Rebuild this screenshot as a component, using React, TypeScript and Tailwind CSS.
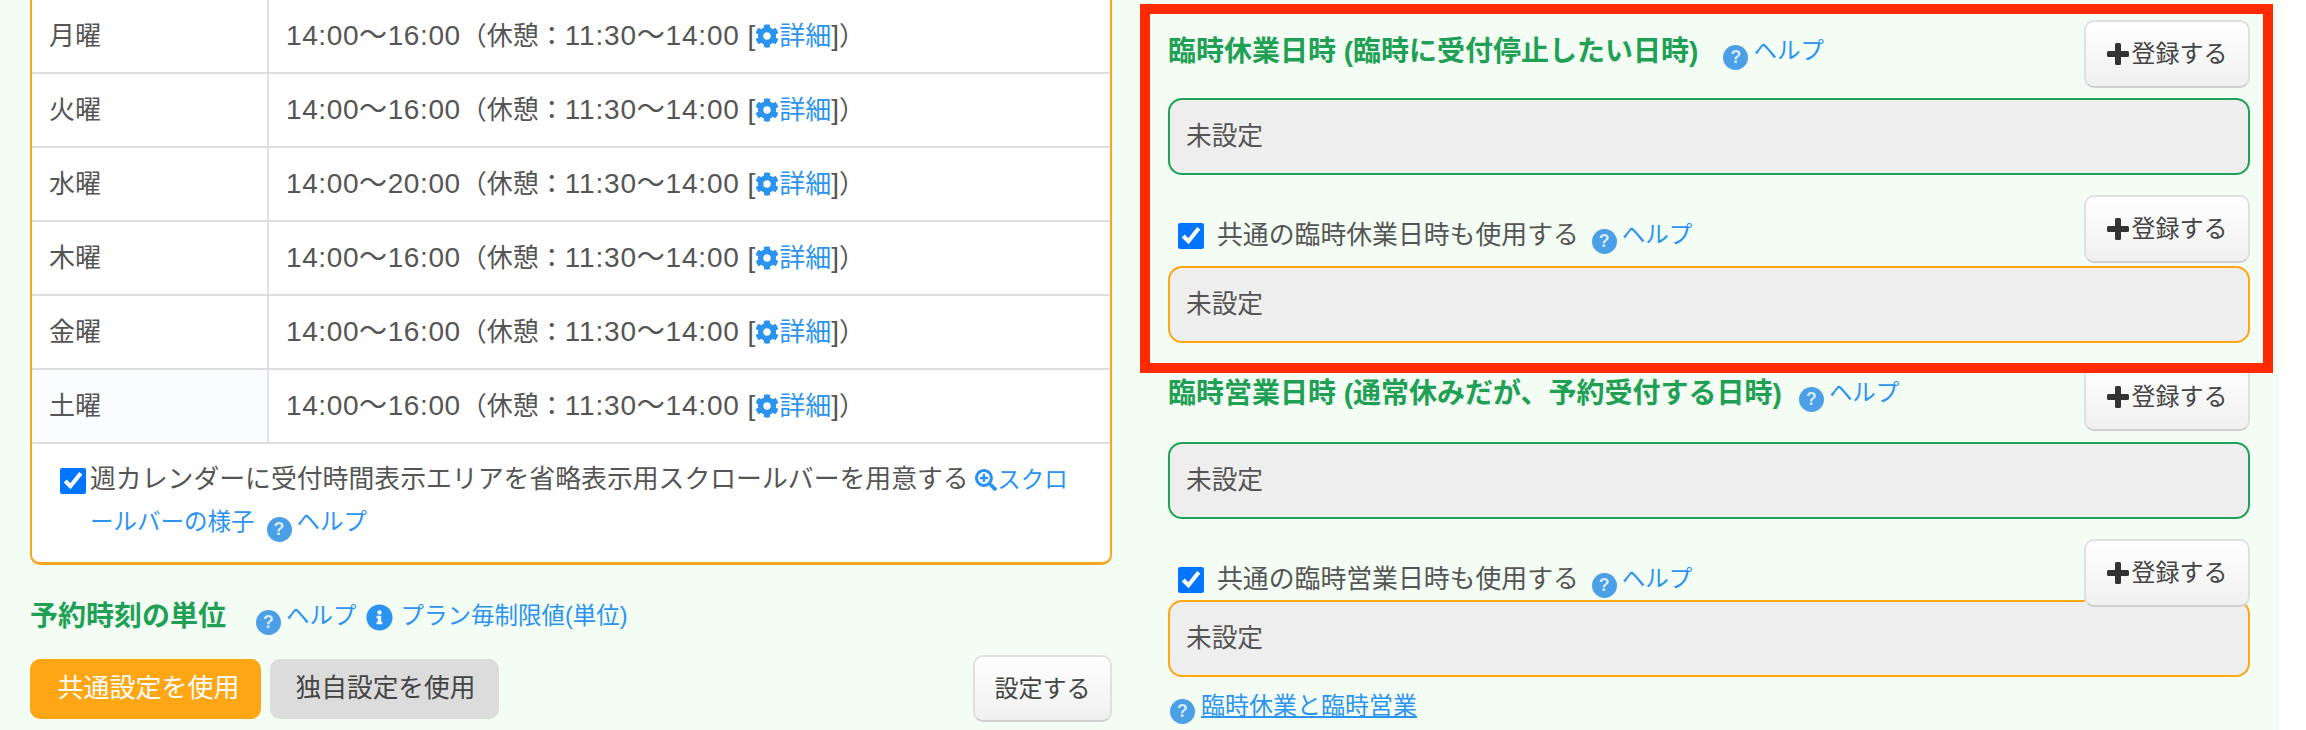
import { FaCog, FaInfoCircle, FaSearchPlus } from 'react-icons/fa'

const hours = [
  { day: '月曜', time: '14:00～16:00' },
  { day: '火曜', time: '14:00～16:00' },
  { day: '水曜', time: '14:00～20:00' },
  { day: '木曜', time: '14:00～16:00' },
  { day: '金曜', time: '14:00～16:00' },
  { day: '土曜', time: '14:00～16:00' },
]

function HelpIcon({ className = '' }: { className?: string }) {
  return (
    <span className={`inline-flex h-[25px] w-[25px] shrink-0 translate-y-[5px] items-center justify-center rounded-full bg-[#4a9fe6] text-[18px] font-bold leading-none text-[#d8ecfb] blur-[0.5px] ${className}`}>
      ?
    </span>
  )
}

function HelpLink({ label = 'ヘルプ' }: { label?: string }) {
  return <a className="text-[23.5px] leading-none text-[#2b93f0]">{label}</a>
}

function PlusIcon() {
  return (
    <svg viewBox="0 0 22 22" className="h-[22px] w-[22px] shrink-0 text-[#333]" fill="currentColor">
      <path d="M8 1.5A1.5 1.5 0 0 1 9.500 0h3A1.500 1.500 0 0 1 14 1.500V8h6.500A1.500 1.500 0 0 1 22 9.500v3a1.500 1.500 0 0 1-1.500 1.500H14v6.500a1.500 1.500 0 0 1-1.500 1.500h-3A1.500 1.500 0 0 1 8 20.500V14H1.500A1.500 1.500 0 0 1 0 12.500v-3A1.500 1.500 0 0 1 1.500 8H8z" />
    </svg>
  )
}

function AddButton() {
  return (
    <button className="relative z-10 flex h-[68px] w-[166px] shrink-0 items-center justify-center gap-[3px] rounded-[10px] border-2 border-[#e0e0e0] border-b-[#cfcfcf] bg-gradient-to-b from-white to-[#f0f0f0] text-[24px] text-[#444]">
      <PlusIcon />
      登録する
    </button>
  )
}

function ValueBox({ color }: { color: string }) {
  return (
    <div className={`flex h-[77px] items-center rounded-[14px] border-2 bg-[#eeeeee] pl-[16px] text-[25.7px] text-[#555] ${color}`}>
      未設定
    </div>
  )
}

function CommonRow({ label, className }: { label: string; className: string }) {
  return (
    <div className={`flex items-start justify-between ${className}`}>
      <div className="mt-[28px] flex items-center pl-[10px]">
        <input type="checkbox" checked readOnly className="h-[26px] w-[26px] accent-[#0075ff]" />
        <span className="ml-[13px] text-[25.85px] leading-none text-[#555]">{label}</span>
        <HelpIcon className="ml-[13px] mr-[5px]" />
        <HelpLink />
      </div>
      <AddButton />
    </div>
  )
}

export default function App() {
  return (
    <div className="h-[730px] w-full overflow-hidden bg-white font-['Liberation_Sans','Noto_Sans_CJK_JP',sans-serif]">
      <div className="flex h-full w-[2279px] items-start bg-[#f3fdf3] pl-[30px]">
        {/* left column */}
        <div className="w-[1082px] shrink-0">
          <div className="h-[565px] rounded-b-[10px] border-x-2 border-b-[3px] border-[#f5a623] bg-white">
            {hours.map((row) => (
              <div key={row.day} className="flex h-[74px] border-b-2 border-[#dddddd] text-[26px] text-[#555]">
                <div className={`flex w-[237px] items-center border-r-2 border-[#e2e2e2] pl-[17px] ${row.day === '土曜' ? 'bg-[#fbfcff]' : ''}`}>
                  {row.day}
                </div>
                <div className="flex flex-1 items-center whitespace-pre pl-[17px]">
                  <span className="text-[28px] tracking-[0.6px]">{row.time}</span>
                  （休憩：
                  <span className="text-[28px] tracking-[0.8px]">11:30～14:00</span>
                  <span className="text-[28px]"> [</span>
                  <FaCog className="h-[24px] w-[24px] text-[#2b93f0]" />
                  <a className="text-[#2b93f0]">詳細</a>
                  <span className="text-[28px]">]</span>
                  <span className="tracking-[1px]">）</span>
                </div>
              </div>
            ))}
            <div className="relative pl-[58px] pr-[34px] pt-[15px] text-[25.85px] leading-[41px] text-[#555]">
              <input type="checkbox" checked readOnly className="absolute left-[28px] top-[24px] h-[26px] w-[26px] accent-[#0075ff]" />
              週カレンダーに受付時間表示エリアを省略表示用スクロールバーを用意する
              <a className="text-[23.5px] text-[#2b93f0]">
                {' '}
                <FaSearchPlus className="inline h-[22px] w-[22px] align-[-3px]" />
                スクロールバーの様子
              </a>
              <HelpIcon className="ml-[12px] mr-[5px]" />
              <HelpLink />
            </div>
          </div>

          <div className="mt-[34px] flex items-center">
            <h3 className="text-[28px] font-bold leading-[36px] text-[#1fa055]">予約時刻の単位</h3>
            <HelpIcon className="ml-[30px] mr-[5px]" />
            <HelpLink />
            <FaInfoCircle className="ml-[9px] mr-[8px] h-[27px] w-[27px] text-[#2b93f0]" />
            <HelpLink label="プラン毎制限値(単位)" />
          </div>

          <div className="mt-[20px] flex items-center justify-between">
            <div className="flex gap-[9px]">
              <button className="h-[60px] w-[231px] rounded-[10px] bg-[#ffa614] pl-[6px] text-[26px] text-white">共通設定を使用</button>
              <button className="h-[60px] w-[229px] rounded-[10px] bg-[#dcdcdc] pl-[2px] text-[25.7px] text-[#444]">独自設定を使用</button>
            </div>
            <button className="h-[67px] w-[139px] rounded-[10px] border-2 border-[#e0e0e0] border-b-[#cfcfcf] bg-gradient-to-b from-white to-[#f0f0f0] text-[24px] text-[#444]">
              設定する
            </button>
          </div>
        </div>

        {/* right column */}
        <div className="ml-[28px] w-[1133px] shrink-0 pt-[4px]">
          <div className="relative z-20 border-[10px] border-[#ff2a00] bg-[#f3fdf3] pb-[20px] pl-[18px] pr-[13px] pt-[6px]">
            <div className="flex items-start justify-between">
              <div className="mt-[14px] flex items-center">
                <h3 className="text-[28px] font-bold leading-[36px] text-[#1fa055]">臨時休業日時 (臨時に受付停止したい日時)</h3>
                <HelpIcon className="ml-[25px] mr-[5px]" />
                <HelpLink />
              </div>
              <AddButton />
            </div>
            <div className="mt-[10px]">
              <ValueBox color="border-[#1fa055]" />
            </div>
            <CommonRow label="共通の臨時休業日時も使用する" className="mt-[20px] h-[71px]" />
            <ValueBox color="border-[#ffa614]" />
          </div>

          <div className="-mt-[10px] pl-[28px] pr-[23px]">
            <div className="flex items-start justify-between">
              <div className="mt-[13px] flex items-center">
                <h3 className="text-[28px] font-bold leading-[36px] text-[#1fa055]">臨時営業日時 (通常休みだが、予約受付する日時)</h3>
                <HelpIcon className="ml-[17px] mr-[5px]" />
                <HelpLink />
              </div>
              <AddButton />
            </div>
            <div className="mt-[11px]">
              <ValueBox color="border-[#1fa055]" />
            </div>
            <CommonRow label="共通の臨時営業日時も使用する" className="mt-[20px] h-[61px]" />
            <ValueBox color="border-[#ffa614]" />
            <div className="mt-[14px] flex items-center">
              <HelpIcon className="ml-[2px] mr-[6px]" />
              <a className="text-[24px] leading-[30px] text-[#2b93f0] underline">臨時休業と臨時営業</a>
            </div>
          </div>
        </div>
      </div>
    </div>
  )
}
